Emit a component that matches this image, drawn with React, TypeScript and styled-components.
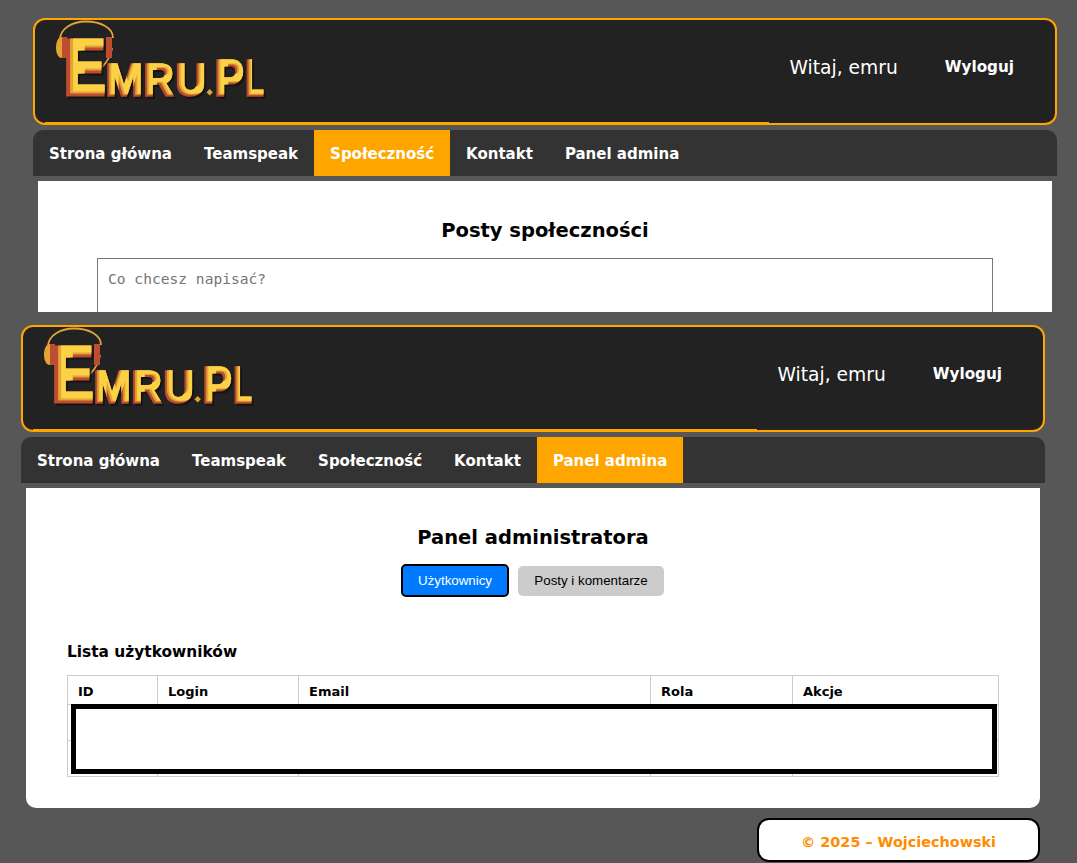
import React from "react";
import styled, { createGlobalStyle } from "styled-components";

const Global = createGlobalStyle`
  html, body { margin: 0; padding: 0; height: 863px; overflow: hidden; background: #575757; }
  body { font-family: "DejaVu Sans", Verdana, sans-serif; color: #000; }
  * { box-sizing: border-box; }
`;

const Page = styled.div`
  display: flex;
  flex-direction: column;
  padding-top: 18px;
`;

const Screen = styled.section<{ $left: number; $top?: number; $clip?: number }>`
  width: 1024px;
  margin-left: ${(p) => p.$left}px;
  margin-top: ${(p) => p.$top ?? 0}px;
  ${(p) => (p.$clip ? `height: ${p.$clip}px; overflow: hidden;` : "")}
`;

const Header = styled.header`
  position: relative;
  height: 107px;
  background: #222;
  border: 2px solid #ffa500;
  border-radius: 12px;
  display: flex;
  align-items: center;
  justify-content: space-between;
  padding: 0 41px 0 20px;
`;

const HeaderAccent = styled.span`
  position: absolute;
  left: 10px;
  bottom: 0;
  width: 724px;
  height: 1px;
  background: #ffa500;
`;

const LogoSvg = styled.svg`
  display: block;
  width: 214px;
  height: 84px;
  margin-top: -19px;
  flex: none;
`;

const UserBox = styled.div`
  display: flex;
  align-items: center;
  gap: 47px;
  margin-top: -9px;
`;

const Welcome = styled.span`
  color: #fff;
  font-size: 18.7px;
`;

const Logout = styled.a`
  color: #fff;
  font-size: 15.2px;
  font-weight: 700;
`;

const Nav = styled.nav`
  display: flex;
  height: 46px;
  margin-top: 5px;
  background: #333;
  border-radius: 10px 10px 0 0;
  overflow: hidden;
`;

const NavItem = styled.a<{ $active?: boolean }>`
  display: flex;
  align-items: center;
  padding: 2px 16px 0;
  font-size: 15px;
  font-weight: 700;
  color: #fff;
  background: ${(p) => (p.$active ? "#ffa500" : "transparent")};
`;

const Main = styled.main<{ $tall?: boolean }>`
  width: 1014px;
  margin: 5px auto 0;
  padding: 37px ${(p) => (p.$tall ? "41px" : "0")} 0;
  background: #fff;
  border-radius: 0 0 10px 10px;
  ${(p) => (p.$tall ? "height: 320px;" : "")}
`;

const Title = styled.h2`
  margin: 0;
  font-size: 19.5px;
  line-height: 26px;
  font-weight: 700;
  text-align: center;
`;

const PostBox = styled.textarea`
  display: block;
  width: 896px;
  height: 90px;
  margin: 14px auto 0;
  padding: 11px 10px;
  border: 1px solid #767676;
  border-radius: 0;
  resize: none;
  outline: none;
  font-family: "DejaVu Sans Mono", monospace;
  font-size: 14.6px;
  background: #fff;
  &::placeholder { color: #757575; opacity: 1; }
`;

const Tabs = styled.div`
  display: flex;
  align-items: center;
  justify-content: center;
  gap: 9px;
  margin-top: 13px;
  padding-right: 1px;
`;

const Tab = styled.button<{ $active?: boolean }>`
  width: ${(p) => (p.$active ? 108 : 146)}px;
  height: ${(p) => (p.$active ? 33 : 30)}px;
  padding: 0;
  font-family: "Liberation Sans", Arial, sans-serif;
  font-size: 13.33px;
  color: ${(p) => (p.$active ? "#fff" : "#000")};
  background: ${(p) => (p.$active ? "#007bff" : "#ccc")};
  border: ${(p) => (p.$active ? "2px solid #000" : "0")};
  border-radius: 5px;
`;

const SubTitle = styled.h3`
  margin: 45px 0 0;
  font-size: 15.4px;
  line-height: 20px;
  font-weight: 700;
`;

const TableWrap = styled.div`
  position: relative;
  margin-top: 13px;
`;

const UsersTable = styled.table`
  width: 931px;
  table-layout: fixed;
  border-collapse: collapse;
  font-size: 13px;
`;

const Th = styled.th<{ $w: number }>`
  width: ${(p) => p.$w}px;
  height: 29px;
  padding: 2px 10px 0;
  text-align: left;
  font-weight: 700;
  border: 1px solid #ccc;
`;

const Td = styled.td`
  height: 36px;
  border: 1px solid #ccc;
`;

const Redaction = styled.div`
  position: absolute;
  left: 4px;
  top: 29px;
  width: 926px;
  height: 70px;
  background: #fff;
  border: 5px solid #000;
`;

const FooterRow = styled.footer`
  display: flex;
  justify-content: flex-end;
  width: 1019px;
  margin-top: 10px;
`;

const Footer = styled.div`
  width: 283px;
  height: 44px;
  display: flex;
  align-items: center;
  justify-content: center;
  padding-top: 4px;
  background: #fff;
  border: 2px solid #000;
  border-radius: 12px;
  color: #ff8c00;
  font-size: 14.4px;
  font-weight: 700;
`;

const LetterText = styled.text`
  font-family: "Liberation Sans", Arial, sans-serif;
  font-weight: 700;
`;

type LetterProps = { ch: string; x: number; y: number; size: number; w: number; filter: string; weight: number };

function Letter({ ch, x, y, size, w, filter, weight }: LetterProps) {
  return (
    <LetterText
      x={x}
      y={y}
      fontSize={size}
      textLength={w}
      lengthAdjust="spacingAndGlyphs"
      fill="#000"
      stroke="#000"
      strokeWidth={weight}
      filter={`url(#${filter})`}
    >
      {ch}
    </LetterText>
  );
}

function BevelFilter({ id, a, b }: { id: string; a: [number, number]; b: [number, number] }) {
  return (
    <filter id={id} x="-20%" y="-20%" width="140%" height="140%" colorInterpolationFilters="sRGB">
      <feOffset in="SourceAlpha" dx="1.5" dy="1.5" result="sh" />
      <feFlood floodColor="#111" floodOpacity="0.8" />
      <feComposite in2="sh" operator="in" result="shadow" />
      <feFlood floodColor="#bd4c30" />
      <feComposite in2="SourceAlpha" operator="in" result="red" />
      <feOffset in="SourceAlpha" dx={a[0]} dy={a[1]} result="o1" />
      <feComposite in="o1" in2="SourceAlpha" operator="in" result="m1" />
      <feFlood floodColor="#e3a436" />
      <feComposite in2="m1" operator="in" result="mid" />
      <feOffset in="SourceAlpha" dx={b[0]} dy={b[1]} result="o2" />
      <feComposite in="o2" in2="SourceAlpha" operator="in" result="m2" />
      <feFlood floodColor="#fbd146" />
      <feComposite in2="m2" operator="in" result="top" />
      <feMerge>
        <feMergeNode in="shadow" />
        <feMergeNode in="red" />
        <feMergeNode in="mid" />
        <feMergeNode in="top" />
      </feMerge>
    </filter>
  );
}

function Logo({ prefix }: { prefix: string }) {
  const big = `${prefix}big`;
  const small = `${prefix}small`;
  return (
    <LogoSvg viewBox="0 0 214 84" role="img" aria-label="Emru.pl">
      <defs>
        <BevelFilter id={big} a={[4, -3]} b={[7, -5]} />
        <BevelFilter id={small} a={[2, -2]} b={[4, -3]} />
      </defs>
      <path d="M5 20 C5 8 18 1.5 31 1.5 C46 1.5 58 8 58 18" fill="none" stroke="#e3a436" strokeWidth="1.8" />
      <path d="M57 28 C56 36 52 42 47 47" fill="none" stroke="#e3a436" strokeWidth="1.8" />
      <path d="M7 17 L7 38 C3 38 1 33 1 27.5 C1 22 3 17 7 17 Z" fill="#e3a436" />
      <rect x="7" y="17" width="5" height="21" fill="#bd4c30" />
      <rect x="51" y="17" width="6" height="21" fill="#bd4c30" />
      <Letter ch="E" x={8} y={75} size={80} w={43} filter={big} weight={3} />
      <Letter ch="M" x={50} y={75.5} size={46} w={38} filter={small} weight={1.6} />
      <Letter ch="R" x={88} y={75.5} size={46} w={31} filter={small} weight={1.6} />
      <Letter ch="U" x={120} y={75.5} size={46} w={31} filter={small} weight={1.6} />
      <rect x="152.5" y="70" width="4.5" height="4.5" transform="rotate(45 154.7 72.2)" fill="#e3a436" />
      <Letter ch="P" x={159} y={75.5} size={52} w={30} filter={small} weight={1.6} />
      <Letter ch="L" x={190} y={75.5} size={52} w={19} filter={small} weight={1.6} />
    </LogoSvg>
  );
}

const menu = ["Strona główna", "Teamspeak", "Społeczność", "Kontakt", "Panel admina"];

function Chrome({ active, prefix }: { active: string; prefix: string }) {
  return (
    <>
      <Header>
        <Logo prefix={prefix} />
        <UserBox>
          <Welcome>Witaj, emru</Welcome>
          <Logout>Wyloguj</Logout>
        </UserBox>
        <HeaderAccent />
      </Header>
      <Nav>
        {menu.map((m) => (
          <NavItem key={m} $active={m === active}>{m}</NavItem>
        ))}
      </Nav>
    </>
  );
}

const columns: [string, number][] = [["ID", 90], ["Login", 141], ["Email", 352], ["Rola", 142], ["Akcje", 206]];

export default function App() {
  return (
    <Page>
      <Global />
      <Screen $left={33} $clip={294}>
        <Chrome active="Społeczność" prefix="a" />
        <Main>
          <Title>Posty społeczności</Title>
          <PostBox placeholder="Co chcesz napisać?" />
        </Main>
      </Screen>
      <Screen $left={21} $top={13}>
        <Chrome active="Panel admina" prefix="b" />
        <Main $tall>
          <Title>Panel administratora</Title>
          <Tabs>
            <Tab $active>Użytkownicy</Tab>
            <Tab>Posty i komentarze</Tab>
          </Tabs>
          <SubTitle>Lista użytkowników</SubTitle>
          <TableWrap>
            <UsersTable>
              <thead>
                <tr>{columns.map(([c, w]) => <Th key={c} $w={w}>{c}</Th>)}</tr>
              </thead>
              <tbody>
                {[0, 1].map((r) => (
                  <tr key={r}>{columns.map(([c]) => <Td key={c} />)}</tr>
                ))}
              </tbody>
            </UsersTable>
            <Redaction />
          </TableWrap>
        </Main>
        <FooterRow>
          <Footer>© 2025 – Wojciechowski</Footer>
        </FooterRow>
      </Screen>
    </Page>
  );
}
